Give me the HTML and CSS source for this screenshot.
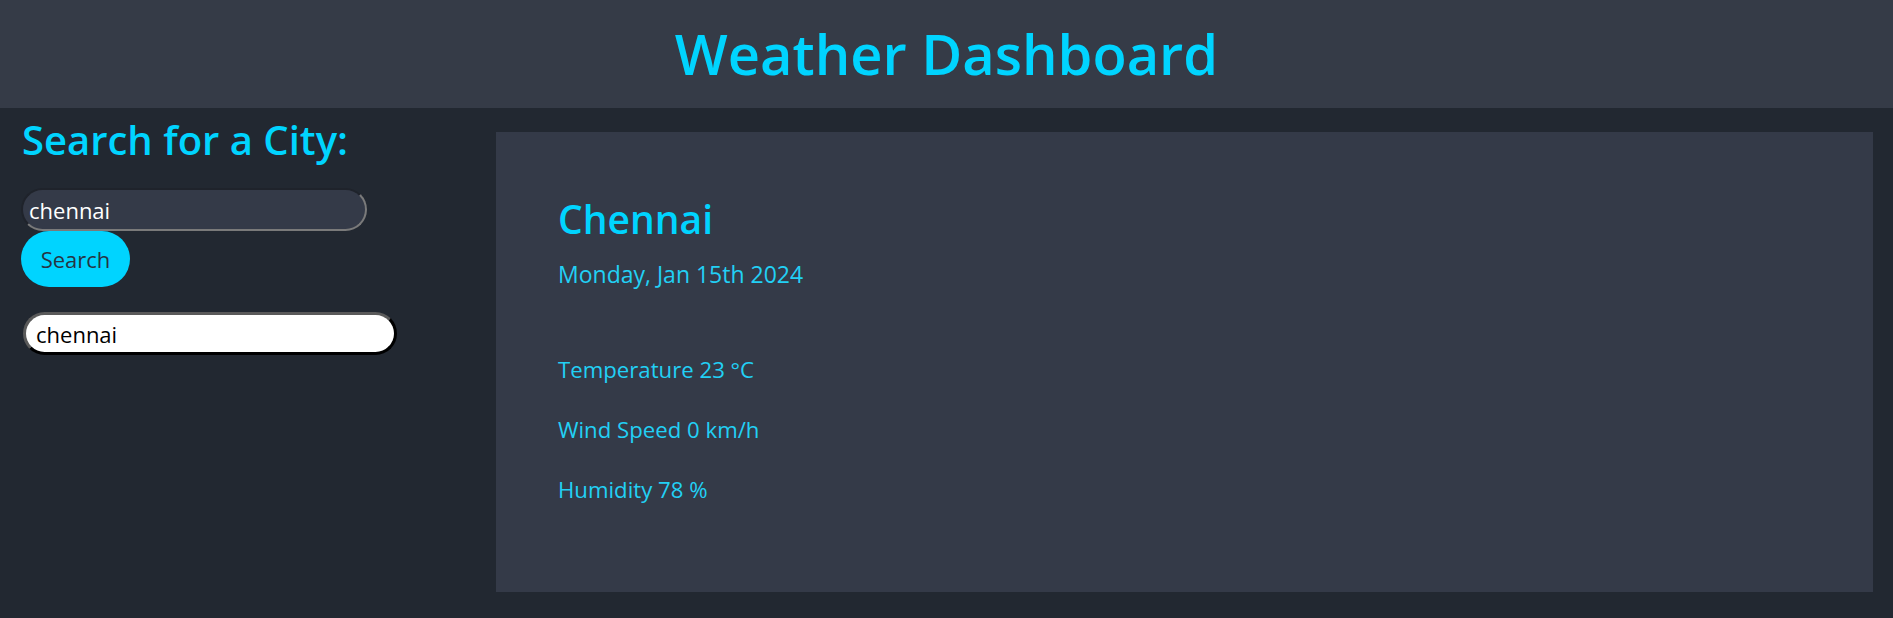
FILE: index.html
```html
<!DOCTYPE html>
<html lang="en">
<head>
<meta charset="utf-8">
<title>Weather Dashboard</title>
<link rel="stylesheet" href="styles.css">
</head>
<body>
<header class="top-bar">
  <h1 class="title">Weather Dashboard</h1>
</header>
<main class="layout">
  <aside class="search-panel">
    <h2 class="search-title">Search for a City:</h2>
    <input class="city-input" type="text" value="chennai">
    <button class="search-btn" type="button">Search</button>
    <button class="history-btn" type="button">chennai</button>
  </aside>
  <section class="weather-card">
    <h2 class="city-name">Chennai</h2>
    <p class="date">Monday, Jan 15th 2024</p>
    <p class="stat stat-first">Temperature 23 °C</p>
    <p class="stat">Wind Speed 0 km/h</p>
    <p class="stat">Humidity 78 %</p>
  </section>
</main>
</body>
</html>
```
FILE: styles.css
```css
* { box-sizing: border-box; }

html, body {
  margin: 0;
  padding: 0;
}

body {
  background: #222831;
  font-family: "Open Sans", "Noto Sans", sans-serif;
  color: #00d4ff;
  min-height: 618px;
}

.top-bar {
  height: 108px;
  background: #353b47;
  display: flex;
  align-items: center;
  justify-content: center;
}

.title {
  margin: 0;
  font-size: 56px;
  font-weight: 600;
  line-height: 1;
  color: #00d4ff;
  padding-bottom: 2px;
}

.layout {
  display: flex;
  align-items: flex-start;
  padding: 0 20px 0 0;
}

.search-panel {
  flex: 0 0 496px;
  padding: 6px 0 0 21px;
  display: flex;
  flex-direction: column;
  align-items: flex-start;
}

.search-title {
  margin: 0 0 22px 1px;
  font-size: 40px;
  font-weight: 600;
  line-height: 52px;
  color: #00d4ff;
}

.city-input {
  width: 346px;
  height: 43px;
  margin: 0;
  padding: 0 6px;
  border: 2px solid #7a7a7a;
  border-top-color: #1f232b;
  border-left-color: #1f232b;
  border-radius: 22px;
  background: #343a48;
  color: #ffffff;
  font-family: inherit;
  font-size: 22px;
  outline: none;
}

.search-btn {
  width: 109px;
  height: 56px;
  margin: 0;
  border: none;
  border-radius: 28px;
  background: #00d4ff;
  color: #263444;
  font-family: inherit;
  font-size: 22px;
  padding: 0;
}

.history-btn {
  width: 374px;
  height: 43px;
  margin: 25px 0 0 2px;
  padding: 0 10px;
  text-align: left;
  border: 3px solid #000;
  border-top-color: #5a5a5a;
  border-left-color: #5a5a5a;
  border-radius: 22px;
  background: #ffffff;
  color: #000000;
  font-family: inherit;
  font-size: 22px;
}

.weather-card {
  flex: 1;
  margin-top: 24px;
  height: 460px;
  background: #343a48;
  padding: 62px 62px 0 62px;
}

.city-name {
  margin: 0 0 14px 0;
  font-size: 39px;
  font-weight: 600;
  line-height: 50px;
  color: #00d4ff;
}

.date {
  margin: 0;
  font-size: 23px;
  line-height: 32px;
  color: #22d0f5;
}

.stat {
  margin: 28px 0 0 0;
  font-size: 22.2px;
  line-height: 32px;
  color: #22d0f5;
}

.stat-first {
  margin-top: 64px;
}
```
